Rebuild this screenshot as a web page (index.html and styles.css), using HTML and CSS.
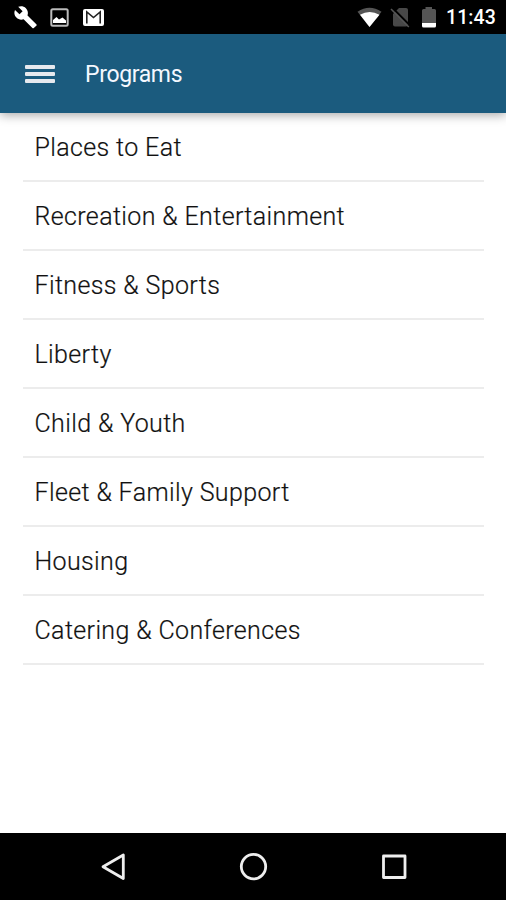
FILE: index.html
```html
<!DOCTYPE html>
<html lang="en">
<head>
  <meta charset="UTF-8">
  <title>Programs</title>
  <link rel="stylesheet" href="styles.css">
</head>
<body>
  <div class="statusbar">
    <svg class="notifications" width="110" height="34" viewBox="0 0 110 34">
      <!-- wrench -->
      <path fill="#fff" d="M36.3 25.2 L27.5 16.4 C28.4 14 27.9 11.2 25.9 9.2 C23.8 7.1 20.7 6.7 18.2 7.8 L22.6 12.2 L19.5 15.3 L15 10.9 C13.8 13.4 14.3 16.5 16.4 18.6 C18.4 20.6 21.2 21.1 23.6 20.2 L32.4 29 C32.8 29.4 33.4 29.4 33.8 29 L36.3 26.7 C36.8 26.3 36.8 25.6 36.3 25.2 Z" transform="translate(0 -1)"/>
      <!-- picture -->
      <rect x="51.3" y="9.3" width="16.4" height="16.4" rx="1.5" fill="none" stroke="#bbb" stroke-width="2"/>
      <path fill="#fff" d="M53 23 V20 L56.5 17 L59 19.5 L62.5 17.5 L66 20.5 V23 Z"/>
      <!-- mail -->
      <rect x="83" y="9" width="21" height="17" rx="2" fill="#fff"/>
      <path fill="none" stroke="#222" stroke-width="1.6" d="M86.8 23.5 V12 L93.5 17.5 L100.2 12 V23.5"/>
    </svg>
    <svg class="system" width="84" height="34" viewBox="356 0 84 34">
      <!-- wifi -->
      <path fill="#555" d="M357.5 11.8 Q369.5 3.5 381.5 11.8 L369.5 27 Z"/>
      <path fill="#fff" d="M360 14.7 Q369.5 9.5 379.5 14.7 L369.5 27 Z"/>
      <!-- no sim -->
      <path fill="#484848" d="M399 8 H406 Q408 8 408 10 V24.5 Q408 26.5 406 26.5 H395 Q393 26.5 393 24.5 V14 Z"/>
      <path stroke="#000" stroke-width="2" d="M392.5 8 L410 25.5"/>
      <path stroke="#555" stroke-width="1.6" d="M391 9 L408.8 27"/>
      <!-- battery -->
      <path fill="#555" d="M425.5 7 H432 V9 H434.5 Q436 9 436 10.5 V23 H422 V10.5 Q422 9 423.5 9 H425.5 Z"/>
      <path fill="#fff" d="M422 23 H436 V26 Q436 27.5 434.5 27.5 H423.5 Q422 27.5 422 26 Z"/>
    </svg>
    <span class="clock">11:43</span>
  </div>

  <div class="header">
    <div class="menu">
      <span class="bar"></span>
      <span class="bar"></span>
      <span class="bar"></span>
    </div>
    <h1>Programs</h1>
  </div>

  <ul class="programs">
    <li>Places to Eat</li>
    <li>Recreation &amp; Entertainment</li>
    <li>Fitness &amp; Sports</li>
    <li>Liberty</li>
    <li>Child &amp; Youth</li>
    <li>Fleet &amp; Family Support</li>
    <li>Housing</li>
    <li>Catering &amp; Conferences</li>
  </ul>

  <div class="navbar">
    <svg width="506" height="67" viewBox="0 833 506 67" fill="none" stroke="#eee" stroke-width="2.8" stroke-linejoin="round">
      <path d="M123.3 855 V878.5 L103 866.7 Z"/>
      <circle cx="253.5" cy="866.6" r="12.2"/>
      <rect x="383.5" y="856" width="21.5" height="21.5"/>
    </svg>
  </div>
</body>
</html>
```
FILE: styles.css
```css
body { font-family: Roboto, "Liberation Sans", sans-serif; margin: 0; height: 900px; display: flex; flex-direction: column; background: #fff; overflow: hidden; }
.statusbar { display: flex; align-items: center; height: 34px; background: #000; color: #fff; }
.system { margin-left: auto; }
.clock { width: 66px; padding-left: 6px; box-sizing: border-box; font-size: 19.5px; font-weight: 500; line-height: 34px; margin-top: 2px; letter-spacing: 0.1px; white-space: nowrap; }
.header { display: flex; align-items: center; height: 79px; padding-left: 25px; background: #1b5b7e; color: #f4f8ff; box-shadow: 0 2px 10px rgba(0,0,0,0.35); }
.menu { display: flex; flex-direction: column; gap: 3px; width: 30px; margin-right: 30px; }
.bar { height: 4px; background: #e6e9ee; border-radius: 1px; }
h1 { margin: 0; font-size: 23px; font-weight: 400; line-height: 30px; padding-top: 3px; letter-spacing: -0.35px; }
.programs { list-style: none; flex: 1; margin: 0 22px 0 23px; padding: 0; }
.programs li { height: 69px; box-sizing: border-box; padding-left: 11.5px; border-bottom: 2px solid #ececec; font-size: 25px; font-weight: 300; line-height: 70px; letter-spacing: 0.37px; color: #111; -webkit-text-stroke: 0.2px #111; }
.navbar { height: 67px; background: #000; }
.navbar svg { display: block; }
```
